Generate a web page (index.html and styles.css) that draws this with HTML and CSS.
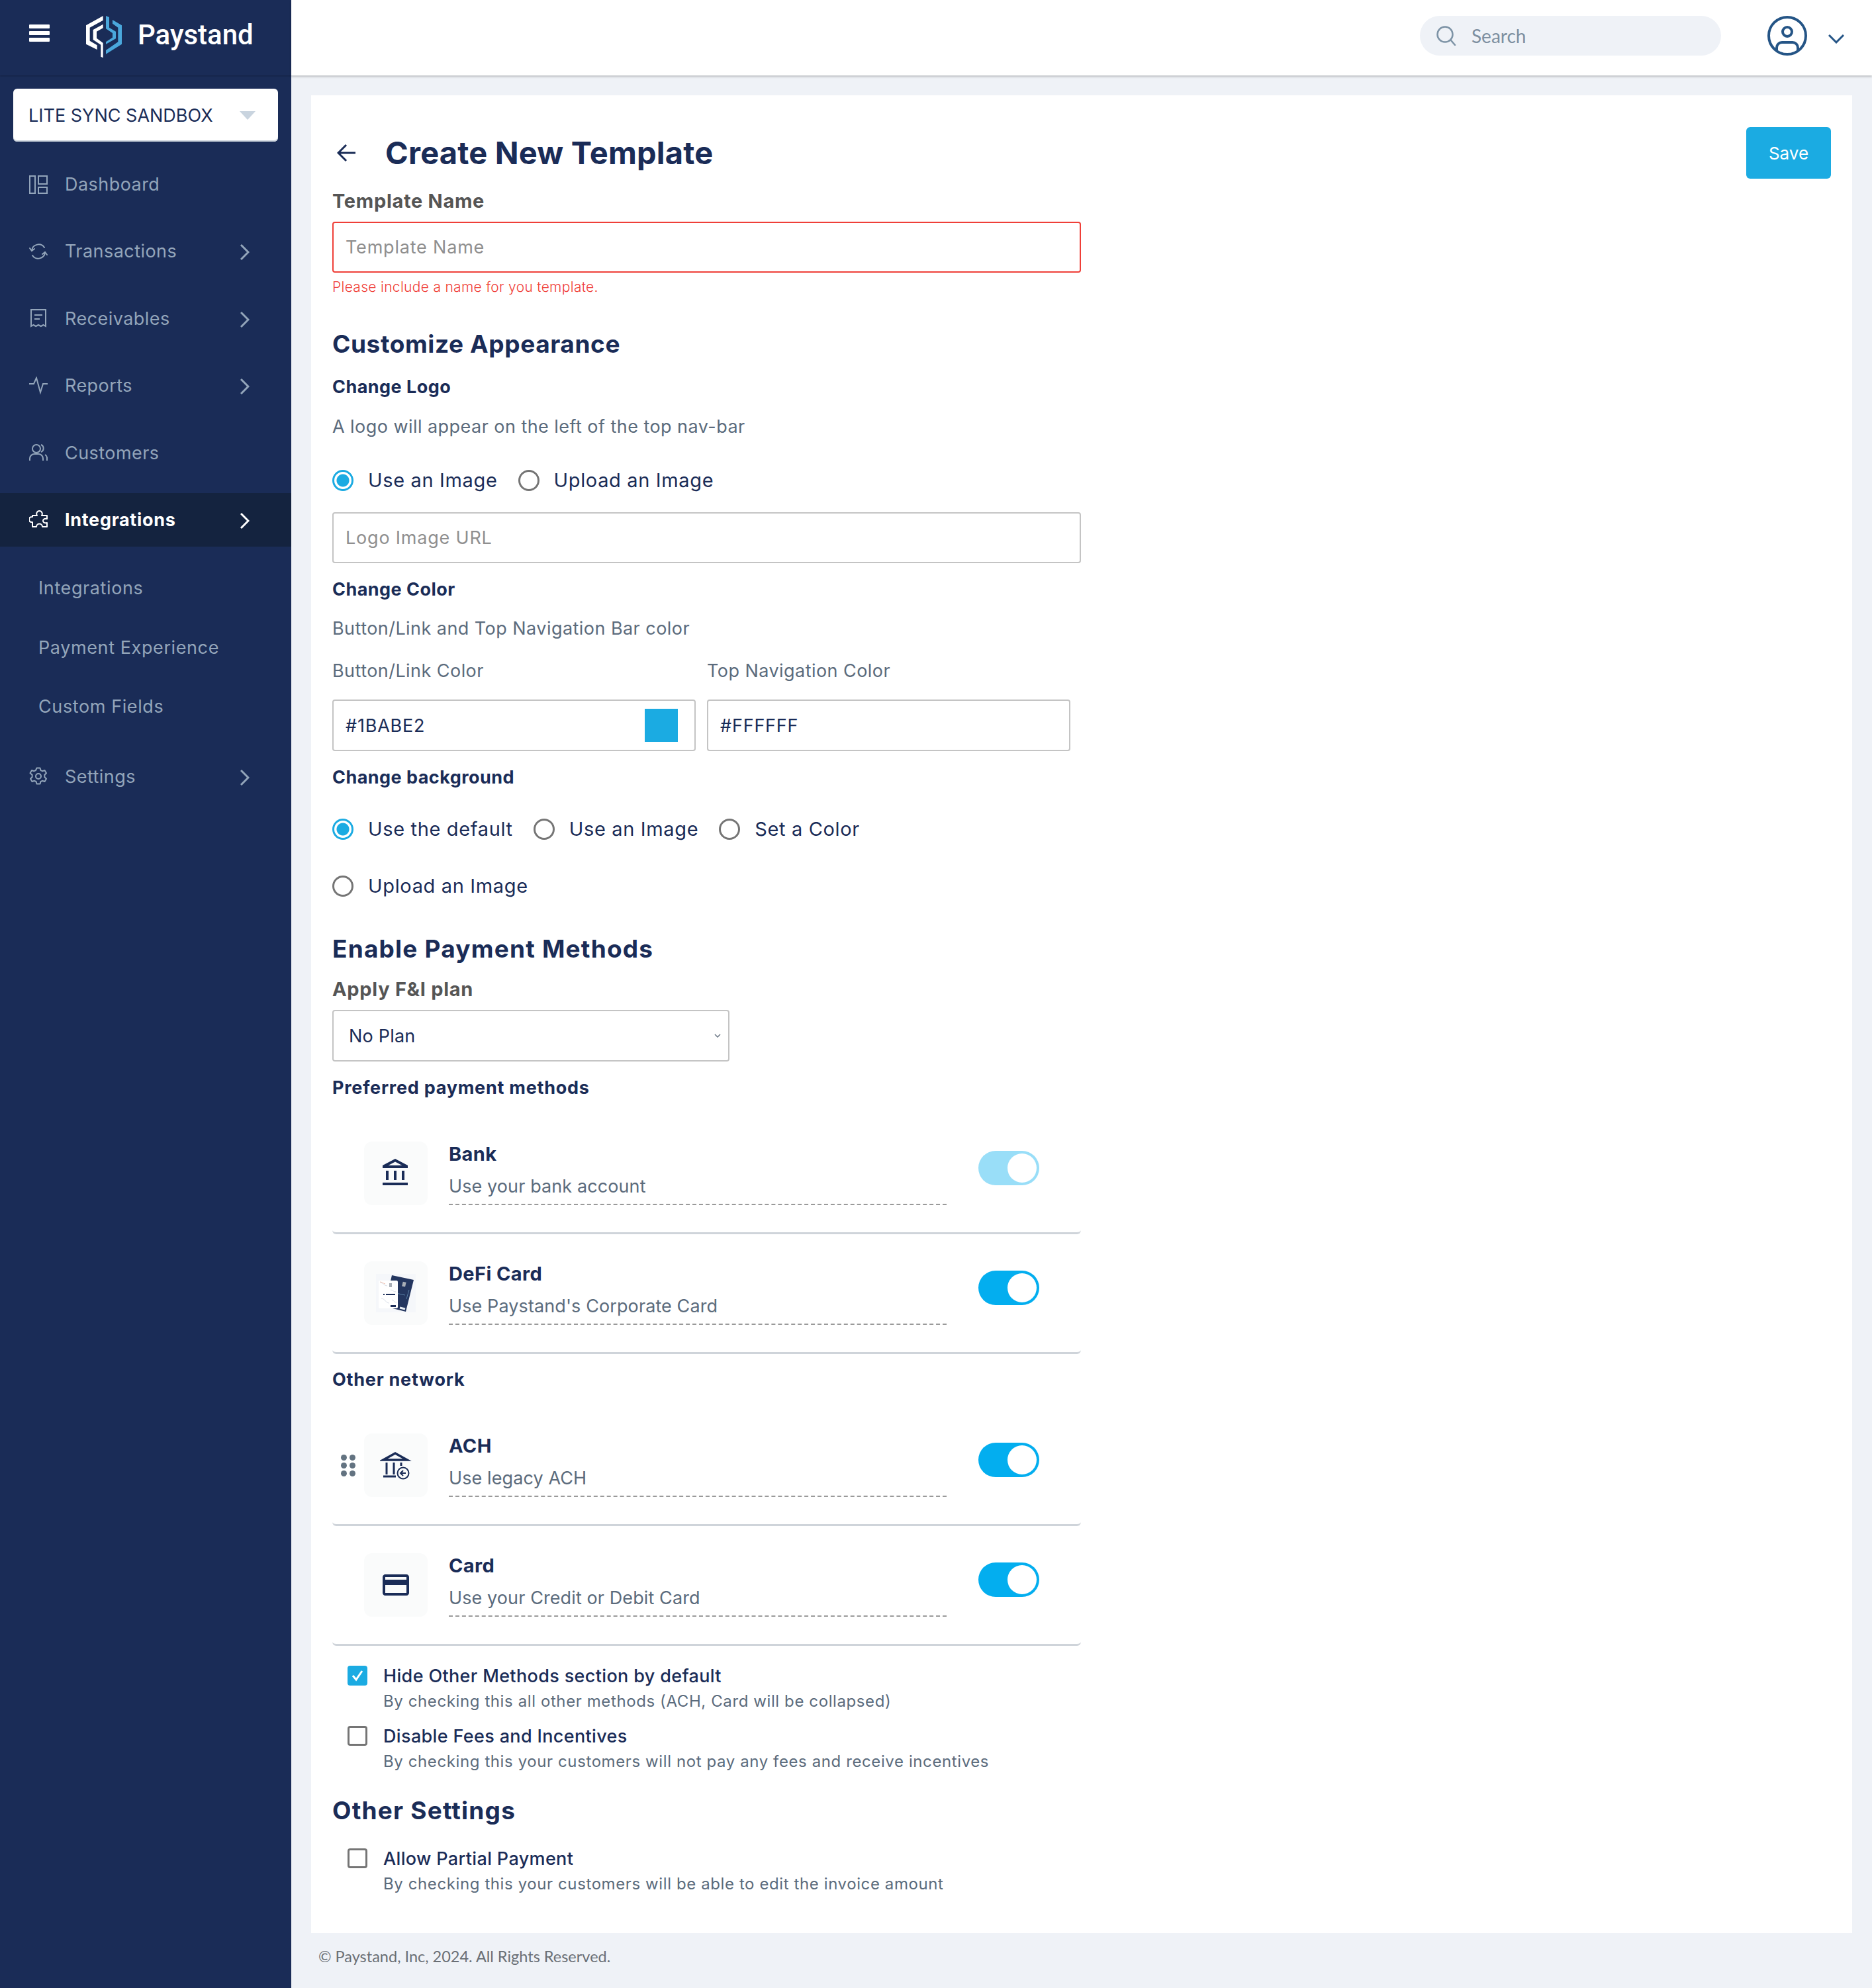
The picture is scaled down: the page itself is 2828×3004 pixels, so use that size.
FILE: index.html
```html
<!DOCTYPE html>
<html lang="en">
<head>
<meta charset="utf-8">
<title>Create New Template</title>
<link rel="stylesheet" href="styles.css">
</head>
<body>
<div class="app">
  <aside class="sidebar">
    <div class="brandbar">
      <div class="burger"><i></i><i></i><i></i></div>
      <svg class="logo" viewBox="0 0 240 225"><path fill="#fff" d="M107 27 30 70v85l50 25v-20l-33-20V80l60-33z"/><path fill="#fff" d="M107 65 62 90v45l35 23v54l10 5v-67L78 128V98l29-16z"/><path fill="#4aa8dc" d="m120 27 15 6v47l30 18v32l-45 25v-10l30-20v-20l-30-20z"/><path fill="#4aa8dc" d="m150 45 42 25v85l-72 45v-17l55-38V80l-25-18z"/></svg>
      <div class="brandname">Paystand</div>
    </div>
    <div class="account"><span>LITE SYNC SANDBOX</span><i class="tri"></i></div>
    <nav class="nav">
      <a class="navrow">
        <svg class="navicon" viewBox="0 0 28 28" fill="none" stroke="currentColor" stroke-width="2"><rect x="1" y="1" width="8" height="26"/><rect x="14" y="1" width="13" height="12"/><rect x="14" y="18" width="13" height="9"/></svg>
        <span>Dashboard</span></a>
      <a class="navrow">
        <svg class="navicon" viewBox="0 0 28 28" fill="none" stroke="currentColor" stroke-width="2" stroke-linecap="round"><path d="M4 12a10.500 10.500 0 0 1 19-4"/><path d="M24 16a10.500 10.500 0 0 1-19 4"/><path d="M1 9l3 4 4-3"/><path d="M27 19l-3-4-4 3"/></svg>
        <span>Transactions</span>
        <svg class="chev" viewBox="0 0 14 24" fill="none" stroke="currentColor" stroke-width="3"><path d="M1 1l11 11L1 23"/></svg></a>
      <a class="navrow">
        <svg class="navicon" viewBox="0 0 28 28" fill="none" stroke="currentColor" stroke-width="2"><path d="M3 1h22v25l-3.500-2-3.700 2-3.800-2-3.800 2-3.700-2L3 26z"/><path d="M8 9h12M8 15h8"/></svg>
        <span>Receivables</span>
        <svg class="chev" viewBox="0 0 14 24" fill="none" stroke="currentColor" stroke-width="3"><path d="M1 1l11 11L1 23"/></svg></a>
      <a class="navrow">
        <svg class="navicon" viewBox="0 0 28 28" fill="none" stroke="currentColor" stroke-width="2"><path d="M0 11H7L11 2L17 24L21 11H28"/></svg>
        <span>Reports</span>
        <svg class="chev" viewBox="0 0 14 24" fill="none" stroke="currentColor" stroke-width="3"><path d="M1 1l11 11L1 23"/></svg></a>
      <a class="navrow">
        <svg class="navicon" viewBox="0 0 28 28" fill="none" stroke="currentColor" stroke-width="2"><circle cx="11" cy="8" r="6"/><path d="M1 26v-3a7 7 0 0 1 7-7h6a7 7 0 0 1 7 7v3"/><path d="M18 2a6 6 0 0 1 0 11"/><path d="M24 17a6 6 0 0 1 3 6v3"/></svg>
        <span>Customers</span></a>
      <a class="navrow active">
        <svg class="navicon" viewBox="0 0 28 28" fill="none" stroke="currentColor" stroke-width="2" stroke-linejoin="round"><path d="M5 8h7c-2-3 0-7 3.500-7s5.500 4 3.500 7h8v5c-4-1-6 1-6 3s2 4 6 3v6h-7c0-6-9-6-9 0H5v-7H4c-3 0-4-2-4-4s1-4 4-4h1z"/></svg>
        <span>Integrations</span>
        <svg class="chev" viewBox="0 0 14 24" fill="none" stroke="currentColor" stroke-width="3"><path d="M1 1l11 11L1 23"/></svg></a>
      <div class="subnav">
        <a>Integrations</a>
        <a>Payment Experience</a>
        <a>Custom Fields</a>
      </div>
      <a class="navrow">
        <svg class="navicon" viewBox="0 0 28 28" fill="none" stroke="currentColor" stroke-width="2" stroke-linejoin="round"><circle cx="14" cy="14" r="4"/><path d="M11.500 1.500h5l1 3.500 2.500 1.200 3.500-1.200 2.500 4.300-2.600 2.500v3.400l2.600 2.500-2.500 4.300-3.500-1.200-2.500 1.200-1 3.500h-5l-1-3.500-2.500-1.200-3.500 1.200-2.500-4.300 2.600-2.500v-3.400L1.500 9.300 4 5l3.500 1.200L10 5z"/></svg>
        <span>Settings</span>
        <svg class="chev" viewBox="0 0 14 24" fill="none" stroke="currentColor" stroke-width="3"><path d="M1 1l11 11L1 23"/></svg></a>
    </nav>
  </aside>
  <div class="right">
    <header class="topbar">
      <div class="search">
        <svg class="searchicon" viewBox="0 0 30 30" fill="none" stroke="#7d93a6" stroke-width="2.500" stroke-linecap="round"><circle cx="13" cy="13" r="11.500"/><path d="M22 22l6 7"/></svg>
        <span>Search</span>
      </div>
      <svg class="avatar" viewBox="0 0 60 60" fill="none" stroke="#255586" stroke-width="4"><circle cx="30" cy="30" r="28"/><circle cx="30" cy="24" r="7"/><path d="M14 52v-4a8 8 0 0 1 8-8h16a8 8 0 0 1 8 8v4"/></svg>
      <svg class="caret" viewBox="0 0 24 14" fill="none" stroke="#255586" stroke-width="3"><path d="M1 1l11 11L23 1"/></svg>
    </header>
    <main class="content">
      <section class="card">
        <div class="head">
          <svg class="back" viewBox="0 0 28 28" fill="none" stroke="#1a2c57" stroke-width="3"><path d="M28 14H2M14 2 2 14l12 12"/></svg>
          <h1>Create New Template</h1>
          <button class="save">Save</button>
        </div>
        <div class="field-label gap-a">Template Name</div>
        <div class="input invalid gap-b"><span class="ph">Template Name</span></div>
        <div class="error">Please include a name for you template.</div>
        <h2 class="gap-c">Customize Appearance</h2>
        <h4 class="gap-d">Change Logo</h4>
        <p class="note gap-e">A logo will appear on the left of the top nav-bar</p>
        <div class="radios gap-f">
          <label class="radio on"><i></i>Use an Image</label>
          <label class="radio"><i></i>Upload an Image</label>
        </div>
        <div class="input gap-g"><span class="ph">Logo Image URL</span></div>
        <h4 class="gap-h">Change Color</h4>
        <p class="note gap-i">Button/Link and Top Navigation Bar color</p>
        <div class="colors gap-j">
          <div class="note colname">Button/Link Color</div>
          <div class="note colname">Top Navigation Color</div>
        </div>
        <div class="colors gap-k">
          <div class="input color">#1BABE2<i class="swatch"></i></div>
          <div class="input color">#FFFFFF</div>
        </div>
        <h4 class="gap-h">Change background</h4>
        <div class="radios gap-l">
          <label class="radio on"><i></i>Use the default</label>
          <label class="radio"><i></i>Use an Image</label>
          <label class="radio"><i></i>Set a Color</label>
        </div>
        <div class="radios gap-m">
          <label class="radio"><i></i>Upload an Image</label>
        </div>
        <h2 class="wide gap-n">Enable Payment Methods</h2>
        <div class="field-label gap-o">Apply F&amp;I plan</div>
        <div class="select gap-b">No Plan
          <svg viewBox="0 0 10 6" fill="none" stroke="#6b7785" stroke-width="1.500"><path d="M1 1l4 4 4-4"/></svg>
        </div>
        <h4 class="wide gap-p">Preferred payment methods</h4>
        <div class="methods gap-q">
          <div class="method">
            <div class="grip"></div>
            <div class="mbox"><svg class="micon" viewBox="0 0 24 24" fill="#1a2c57"><path d="M6.500 10h-2v7h2v-7zm6 0h-2v7h2v-7zm8.500 9H2v2h19v-2zm-2.500-9h-2v7h2v-7zm-7-6.740L16.710 6H6.290l5.210-2.740m0-2.260L2 6v2h19V6l-9.500-5z"/></svg></div>
            <div class="mtext"><div class="mtitle">Bank</div><div class="msub">Use your bank account</div></div>
            <div class="toggle dim"><i></i></div>
          </div>
          <div class="method">
            <div class="grip"></div>
            <div class="mbox">
              <svg class="cards" viewBox="0 0 60 60">
                <rect x="0" y="1" width="60" height="58" fill="#f5f7fa"/>
                <path d="M24 3 57 10 45 58 13 50z" fill="#24365f"/>
                <rect x="40" y="13" width="5" height="7" fill="#a9aeb6" transform="rotate(13 42 16)"/>
                <path d="M30 30l14 3M50 25l-4 14" stroke="#5a7fa5" stroke-width="1" fill="none"/>
                <path d="M36 52l8 2" stroke="#e8edf3" stroke-width="3" fill="none"/>
                <rect x="4" y="11" width="29" height="42" rx="2" fill="#fff"/>
                <rect x="20" y="15" width="4" height="6" fill="#a9aeb6"/>
                <path d="M6 14c5 0 6 5 11 5M8 38c5 0 7 7 12 7M22 25c3 0 4 3 8 3M24 40c2 0 3 4 7 4" stroke="#d9dfe8" stroke-width="1" fill="none"/>
                <path d="M6 13c3 0 4 2 8 3" stroke="#f3c6b5" stroke-width="1" fill="none"/>
                <path d="M11 32h2M15 32h14" stroke="#1a2c57" stroke-width="2" fill="none"/>
                <rect x="22" y="48" width="8" height="3" fill="#1a2c57"/>
              </svg>
            </div>
            <div class="mtext"><div class="mtitle">DeFi Card</div><div class="msub">Use Paystand's Corporate Card</div></div>
            <div class="toggle"><i></i></div>
          </div>
        </div>
        <h4 class="wide gap-r">Other network</h4>
        <div class="methods gap-s">
          <div class="method">
            <div class="grip"><b></b><b></b><b></b><b></b><b></b><b></b></div>
            <div class="mbox">
              <svg class="micon" viewBox="0 0 48 48" fill="none" stroke="#1a2c57"><path d="M23 6 5 16h36z" stroke-width="3.500" stroke-linejoin="miter"/><path d="M10 20v18M21 20v18M32 20v5M5 41h19" stroke-width="3"/><circle cx="35" cy="36" r="8.500" stroke-width="2" fill="#fafbfb"/><path d="M39 36h-7M35 32l-4 4 4 4" stroke-width="2"/></svg>
            </div>
            <div class="mtext"><div class="mtitle">ACH</div><div class="msub">Use legacy ACH</div></div>
            <div class="toggle"><i></i></div>
          </div>
          <div class="method">
            <div class="grip"></div>
            <div class="mbox"><svg class="micon" viewBox="0 0 24 24" fill="#1a2c57"><path d="M20 4H4c-1.110 0-1.990.89-1.990 2L2 18c0 1.110.89 2 2 2h16c1.110 0 2-.89 2-2V6c0-1.110-.89-2-2-2zm0 14H4v-6h16v6zm0-10H4V6h16v2z"/></svg></div>
            <div class="mtext"><div class="mtitle">Card</div><div class="msub">Use your Credit or Debit Card</div></div>
            <div class="toggle"><i></i></div>
          </div>
        </div>
        <div class="check on gap-t">
          <i><svg viewBox="0 0 30 30" fill="none" stroke="#fff" stroke-width="3"><path d="M8 15l5 6 9-13"/></svg></i>
          <div><div class="ctitle">Hide Other Methods section by default</div><div class="csub">By checking this all other methods (ACH, Card will be collapsed)</div></div>
        </div>
        <div class="check gap-u">
          <i></i>
          <div><div class="ctitle">Disable Fees and Incentives</div><div class="csub">By checking this your customers will not pay any fees and receive incentives</div></div>
        </div>
        <h2 class="wide gap-v">Other Settings</h2>
        <div class="check gap-w">
          <i></i>
          <div><div class="ctitle">Allow Partial Payment</div><div class="csub">By checking this your customers will be able to edit the invoice amount</div></div>
        </div>
      </section>
      <footer class="foot">© Paystand, Inc, 2024. All Rights Reserved.</footer>
    </main>
  </div>
</div>
</body>
</html>
```
FILE: styles.css
```css
* { box-sizing: border-box; }
html, body { margin: 0; padding: 0; }
body { font-family: "Inter", "Liberation Sans", sans-serif; color: #1a2c57; background: #eff2f7; }
h1, h2, h4, p { margin: 0; }
.app { display: flex; width: 2828px; height: 3004px; overflow: hidden; }

.sidebar { width: 440px; flex: none; background: #1a2c57; }
.brandbar { height: 114px; display: flex; align-items: flex-start; padding-left: 44px; box-shadow: 0 1px 2px rgba(0,0,0,.25); }
.burger { display: flex; flex-direction: column; gap: 4px; width: 31px; margin-top: 37px; }
.burger i { display: block; height: 6px; background: #fff; border-radius: 1px; }
.logo { width: 80px; height: 75px; margin: 15px 0 0 45px; flex: none; }
.brandname { margin: 26px 0 0 8px; font-family: "Roboto", sans-serif; font-weight: 500; font-size: 42px; line-height: 54px; color: #fff; }
.account { margin: 20px 20px 0; height: 80px; background: #fff; border-radius: 6px; box-shadow: inset 0 -2px 0 #cdd5de; display: flex; align-items: center; padding: 0 34px 0 23px; justify-content: space-between; font-size: 27px; color: #1a2c57; }
.tri { width: 0; height: 0; border-left: 12px solid transparent; border-right: 12px solid transparent; border-top: 13px solid #c9d4df; }
.nav { display: flex; flex-direction: column; gap: 20.4px; margin-top: 24px; }
.navrow { height: 81px; display: flex; align-items: center; padding: 0 63px 0 44px; color: #93a5ba; font-size: 27px; letter-spacing: .45px; }
.navrow span { margin-left: 26px; }
.navrow.active { background: #14233f; color: #fff; font-weight: 700; letter-spacing: .7px; }
.navicon { width: 28px; height: 28px; flex: none; }
.chev { width: 14px; height: 24px; margin: 3px 0 0 auto; flex: none; }
.subnav { display: flex; flex-direction: column; margin-top: -2.400px; }
.subnav a { height: 89.500px; display: flex; align-items: center; padding-left: 58px; color: #93a5ba; font-size: 27px; letter-spacing: .6px; }

.right { flex: 1; min-width: 0; display: flex; flex-direction: column; }
.topbar { height: 114px; background: #fff; box-shadow: 0 2px 3px rgba(0,0,0,.22); display: flex; align-items: flex-start; justify-content: flex-end; padding: 24px 42px 0 0; position: relative; }
.search { width: 455px; height: 60px; background: #eff2f7; border-radius: 30px; display: flex; align-items: center; padding-left: 25px; margin-right: 70px; font-family: "Lato", sans-serif; font-size: 28px; color: #7d8fa0; }
.searchicon { width: 30px; height: 30px; margin-right: 23px; }
.avatar { width: 60px; height: 60px; }
.caret { width: 24px; height: 14px; margin: 28px 0 0 32px; }

.content { flex: 1; padding: 30px 30px 0; display: flex; flex-direction: column; }
.card { background: #fff; padding: 48px 32px 58px 32px; }
.foot { height: 83px; display: flex; align-items: center; padding: 0 0 13px 11px; font-family: "Lato", sans-serif; font-size: 23.500px; color: #6a6f75; }

.head { display: flex; align-items: center; height: 78px; }
.back { width: 28px; height: 28px; margin-left: 7px; }
h1 { margin-left: 45px; font-size: 47px; font-weight: 700; line-height: 60px; flex: 1; letter-spacing: .2px; }
.save { width: 128px; height: 78px; border: 0; border-radius: 6px; background: #1babe2; color: #fff; font: 400 26px "Inter", sans-serif; }

.field-label { font-size: 29px; font-weight: 700; line-height: 36px; color: #555; letter-spacing: .7px; }
h2 { font-size: 37px; font-weight: 700; line-height: 48px; color: #1a2c57; letter-spacing: .6px; }
h2.wide { letter-spacing: 1.200px; }
h4 { font-size: 27px; font-weight: 700; line-height: 36px; color: #1a2c57; letter-spacing: .45px; }
h4.wide { letter-spacing: .75px; }
.note { font-size: 27px; line-height: 40px; color: #5b6b7c; letter-spacing: .45px; }
.colname { line-height: 36px; }
.input { height: 77px; width: 1131px; border: 2px solid #c4c4c4; border-radius: 4px; padding: 0 18px; display: flex; align-items: center; font-size: 27px; letter-spacing: .8px; }
.input.invalid { border-color: #ef3f38; }
.ph { color: #8f8f8f; }
.error { margin-top: 8px; font-size: 21px; line-height: 28px; color: #f0403a; letter-spacing: .3px; font-weight: 300; }

.radios { display: flex; align-items: center; height: 40px; gap: 31px; }
.radio { display: flex; align-items: center; font-size: 29px; color: #1a2c57; letter-spacing: .65px; padding-bottom: 2px; }
.radio i { width: 32px; height: 32px; border-radius: 50%; border: 3px solid #757575; margin: 2px 22px 0 0; flex: none; }
.radio.on i { border-color: #1babe2; background: radial-gradient(circle, #1babe2 0 9px, #fff 10px); }

.colors { display: grid; grid-template-columns: 549px 549px; column-gap: 17px; }
.input.color { width: 549px; height: 78px; color: #1a2c57; justify-content: space-between; padding: 0 25px 0 18px; }
.swatch { width: 50px; height: 50px; background: #1babe2; }

.select { width: 600px; height: 78px; border: 2px solid #c4c4c4; border-radius: 4px; display: flex; align-items: center; justify-content: space-between; padding: 0 11px 0 23px; font-size: 27px; letter-spacing: .2px; }
.select svg { width: 10px; height: 6px; }

.method { width: 1131px; height: 181px; padding-top: 41px; display: flex; align-items: flex-start; border-bottom: 3px solid #cfd4da; border-radius: 0 0 6px 6px; }
.grip { width: 48px; height: 96px; flex: none; display: grid; grid-template-columns: 9px 9px; grid-auto-rows: 9px; gap: 3px 3px; column-gap: 4px; align-content: center; padding-left: 13px; }
.grip b { border-radius: 50%; background: #637381; }
.mbox { width: 96px; height: 96px; flex: none; background: #fafbfb; border-radius: 12px; display: flex; align-items: center; justify-content: center; }
.micon { width: 48px; height: 48px; }
.cards { width: 60px; height: 60px; }
.mtext { width: 752px; height: 96px; margin-left: 32px; border-bottom: 2px dashed #9a9a9a; flex: none; }
.mtitle { font-size: 29px; font-weight: 700; line-height: 36px; margin-top: 1px; letter-spacing: .4px; }
.msub { font-size: 27px; line-height: 40px; margin-top: 11px; color: #5b6b7c; letter-spacing: .1px; }
.toggle { width: 92px; height: 52px; margin: 14px 0 0 48px; border-radius: 26px; background: #03aeef; padding: 4px; display: flex; justify-content: flex-end; flex: none; }
.toggle i { width: 44px; height: 44px; border-radius: 50%; background: #fff; }
.toggle.dim { opacity: .4; }

.check { display: flex; align-items: flex-start; padding-left: 23px; }
.check > i { width: 30px; height: 30px; margin-top: 2px; margin-right: 24px; border: 3px solid #757575; border-radius: 4px; flex: none; }
.check.on > i { border: 0; background: #1babe2; }
.check > i svg { display: block; width: 30px; height: 30px; }
.ctitle { font-size: 27px; font-weight: 500; line-height: 36px; color: #1a2c57; letter-spacing: .35px; }
.csub { font-size: 24px; line-height: 32px; margin-top: 4px; color: #5b6b7c; letter-spacing: .6px; }

.gap-a { margin-top: 16px; } .gap-b { margin-top: 13px; } .gap-c { margin-top: 48px; }
.gap-d { margin-top: 23px; } .gap-e { margin-top: 22px; } .gap-f { margin-top: 41px; }
.gap-g { margin-top: 28px; } .gap-h { margin-top: 22px; } .gap-i { margin-top: 21px; }
.gap-j { margin-top: 26px; } .gap-k { margin-top: 25px; } .gap-l { margin-top: 40px; }
.gap-m { margin-top: 46px; } .gap-n { margin-top: 51px; } .gap-o { margin-top: 19px; }
.gap-p { margin-top: 22px; } .gap-q { margin-top: 22px; } .gap-r { margin-top: 21px; }
.gap-s { margin-top: 22px; } .gap-t { margin-top: 28px; } .gap-u { margin-top: 19px; }
.gap-v { margin-top: 34px; } .gap-w { margin-top: 31px; }
```
